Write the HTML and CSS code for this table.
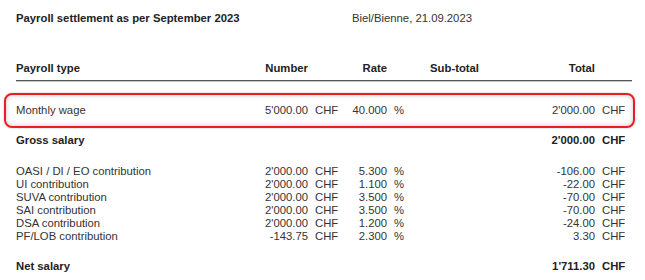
FILE: index.html
```html
<!DOCTYPE html>
<html lang="en">
<head>
<meta charset="utf-8">
<title>Payroll settlement</title>
<link rel="stylesheet" href="styles.css">
</head>
<body>
<div class="page">
  <div class="title-row">
    <div class="title">Payroll settlement as per September 2023</div>
    <div class="place">Biel/Bienne, 21.09.2023</div>
  </div>

  <div class="row head">
    <div class="lbl">Payroll type</div>
    <div class="num">Number</div>
    <div class="unit"></div>
    <div class="num">Rate</div>
    <div class="unit"></div>
    <div class="num">Sub-total</div>
    <div class="unit"></div>
    <div class="num">Total</div>
    <div class="unit"></div>
  </div>

  <div class="row highlight">
    <div class="lbl">Monthly wage</div>
    <div class="num">5'000.00</div>
    <div class="unit">CHF</div>
    <div class="num">40.000</div>
    <div class="unit">%</div>
    <div class="num"></div>
    <div class="unit"></div>
    <div class="num">2'000.00</div>
    <div class="unit">CHF</div>
  </div>

  <div class="row strong gross">
    <div class="lbl">Gross salary</div>
    <div class="num"></div>
    <div class="unit"></div>
    <div class="num"></div>
    <div class="unit"></div>
    <div class="num"></div>
    <div class="unit"></div>
    <div class="num">2'000.00</div>
    <div class="unit">CHF</div>
  </div>

  <div class="group">
    <div class="row">
      <div class="lbl">OASI / DI / EO contribution</div>
      <div class="num">2'000.00</div><div class="unit">CHF</div>
      <div class="num">5.300</div><div class="unit">%</div>
      <div class="num"></div><div class="unit"></div>
      <div class="num">-106.00</div><div class="unit">CHF</div>
    </div>
    <div class="row">
      <div class="lbl">UI contribution</div>
      <div class="num">2'000.00</div><div class="unit">CHF</div>
      <div class="num">1.100</div><div class="unit">%</div>
      <div class="num"></div><div class="unit"></div>
      <div class="num">-22.00</div><div class="unit">CHF</div>
    </div>
    <div class="row">
      <div class="lbl">SUVA contribution</div>
      <div class="num">2'000.00</div><div class="unit">CHF</div>
      <div class="num">3.500</div><div class="unit">%</div>
      <div class="num"></div><div class="unit"></div>
      <div class="num">-70.00</div><div class="unit">CHF</div>
    </div>
    <div class="row">
      <div class="lbl">SAI contribution</div>
      <div class="num">2'000.00</div><div class="unit">CHF</div>
      <div class="num">3.500</div><div class="unit">%</div>
      <div class="num"></div><div class="unit"></div>
      <div class="num">-70.00</div><div class="unit">CHF</div>
    </div>
    <div class="row">
      <div class="lbl">DSA contribution</div>
      <div class="num">2'000.00</div><div class="unit">CHF</div>
      <div class="num">1.200</div><div class="unit">%</div>
      <div class="num"></div><div class="unit"></div>
      <div class="num">-24.00</div><div class="unit">CHF</div>
    </div>
    <div class="row">
      <div class="lbl">PF/LOB contribution</div>
      <div class="num">-143.75</div><div class="unit">CHF</div>
      <div class="num">2.300</div><div class="unit">%</div>
      <div class="num"></div><div class="unit"></div>
      <div class="num">3.30</div><div class="unit">CHF</div>
    </div>
  </div>

  <div class="row strong net">
    <div class="lbl">Net salary</div>
    <div class="num"></div>
    <div class="unit"></div>
    <div class="num"></div>
    <div class="unit"></div>
    <div class="num"></div>
    <div class="unit"></div>
    <div class="num">1'711.30</div>
    <div class="unit">CHF</div>
  </div>
</div>
</body>
</html>
```

FILE: styles.css
```css
html, body {
  margin: 0;
  padding: 0;
  background: #ffffff;
}

body {
  font-family: "Liberation Sans", Arial, sans-serif;
  font-size: 11.3px;
  color: #333333;
}

.page {
  width: 616px;
  padding: 12px 0 0 16px;
}

.title-row {
  display: flex;
  line-height: 13px;
  height: 13px;
}

.title {
  width: 336px;
  font-weight: bold;
  color: #222222;
}

.place {
  color: #333333;
}

.row {
  display: grid;
  grid-template-columns: 200px 92px 32px 47px 23px 69px 41px 75px 37px;
  line-height: 13px;
}

.num {
  text-align: right;
  white-space: nowrap;
}

.unit {
  padding-left: 7px;
  white-space: nowrap;
}

.head {
  margin-top: 37px;
  padding-bottom: 5px;
  font-weight: bold;
  color: #222222;
  border-bottom: 1px solid #5a5a5a;
  box-shadow: 0 1px 0 #c4c4c4;
}

.highlight {
  margin: 12px -3px 0 -12px;
  padding: 9px 1px 9px 10px;
  border: 2px solid #ea1c24;
  border-radius: 8px;
  box-shadow: inset 0 0 5px rgba(0, 0, 0, 0.22), 0 0 3px rgba(0, 0, 0, 0.18);
}

.strong {
  font-weight: bold;
  color: #222222;
}

.gross {
  margin-top: 6px;
}

.group {
  margin-top: 18px;
}

.net {
  margin-top: 17px;
}
```
